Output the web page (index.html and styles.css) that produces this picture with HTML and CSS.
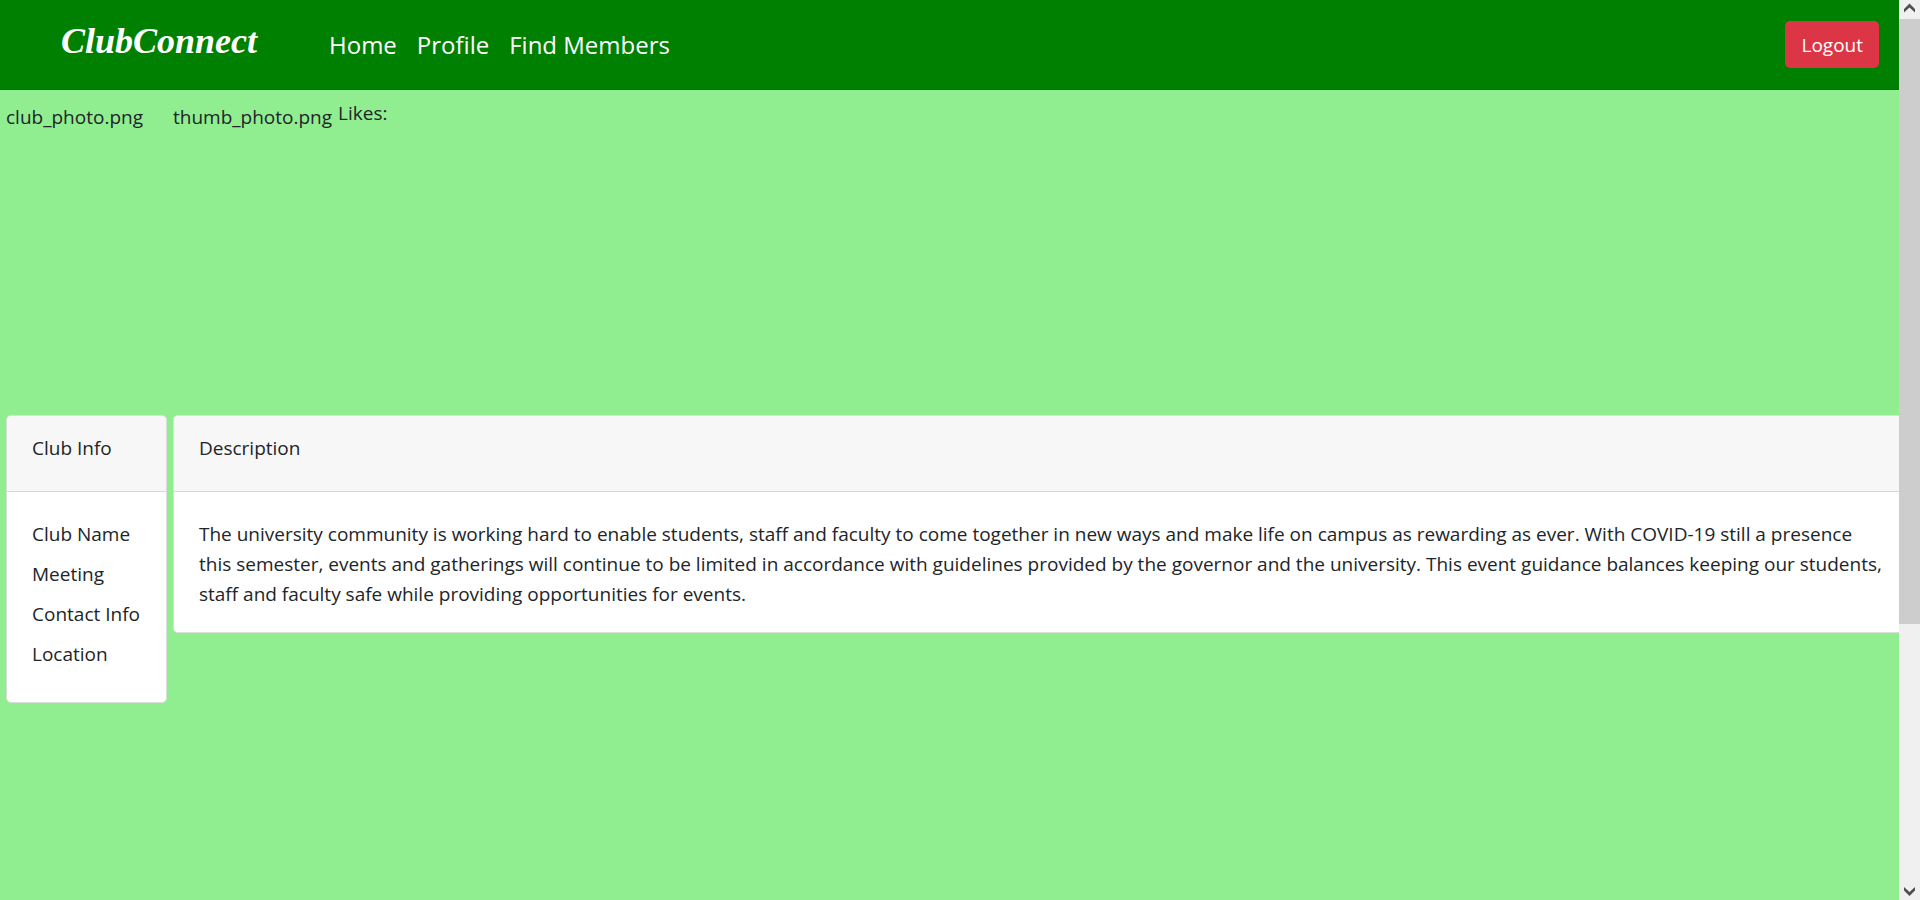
FILE: index.html
```html
<!DOCTYPE html>
<html lang="en">
<head>
<meta charset="utf-8">
<title>ClubConnect</title>
<link rel="stylesheet" href="styles.css">
</head>
<body>
<div class="page">
  <header class="navbar">
    <a class="brand" href="#">ClubConnect</a>
    <nav class="nav-links">
      <a href="#">Home</a>
      <a href="#">Profile</a>
      <a href="#">Find Members</a>
    </nav>
    <button class="logout" type="button">Logout</button>
  </header>
  <main class="club">
    <div class="photo">club_photo.png</div>
    <div class="likes"><span class="thumb">thumb_photo.png</span><span>Likes:</span></div>
    <section class="card">
      <h2 class="card-header">Club Info</h2>
      <ul class="card-body info-list">
        <li>Club Name</li>
        <li>Meeting</li>
        <li>Contact Info</li>
        <li>Location</li>
      </ul>
    </section>
    <section class="card card-wide">
      <h2 class="card-header">Description</h2>
      <p class="card-body">The university community is working hard to enable students, staff and faculty to come together in new ways and make life on campus as rewarding as ever. With COVID-19 still a presence this semester, events and gatherings will continue to be limited in accordance with guidelines provided by the governor and the university. This event guidance balances keeping our students, staff and faculty safe while providing opportunities for events.</p>
    </section>
  </main>
</div>
<div class="scrollbar" aria-hidden="true">
  <svg class="arrow" viewBox="0 0 21 19"><path d="M5 9 10.500 3.500 16 9V12.500L10.500 7.500 5 12.500Z"/></svg>
  <div class="track"><div class="thumb-bar"></div></div>
  <svg class="arrow" viewBox="0 0 21 19"><path d="M5 9.500 10.500 15 16 9.500V6L10.500 11 5 6Z"/></svg>
</div>
</body>
</html>
```
FILE: styles.css
```css
* { box-sizing: border-box; }

body {
  margin: 0;
  min-height: 100vh;
  display: flex;
  background: #90ee90;
  color: #212529;
  font: 19px/30px "Open Sans", "Noto Sans", sans-serif;
}

.page { flex: 1; min-width: 0; }

.navbar {
  display: flex;
  align-items: center;
  min-height: 90px;
  padding: 0 20px 0 61px;
  background: #008000;
  border-bottom: 1px solid #007300;
}

.navbar a { color: #fff; text-decoration: none; }

.brand {
  width: 258px;
  padding-bottom: 8px;
  font: italic bold 36px/48px "Liberation Serif", serif;
}

.nav-links {
  display: flex;
  gap: 20px;
  padding: 0 10px;
  font-size: 24px;
  line-height: 38px;
}

.logout {
  margin-left: auto;
  padding: 9px 16px 8px;
  border: 0;
  border-radius: 5px;
  background: #dc3545;
  color: #fff;
  font: inherit;
}

.club {
  display: grid;
  grid-template-columns: max-content 1fr;
  grid-template-rows: 313px auto;
  align-items: start;
  gap: 6px;
  padding: 6px 0 6px 6px;
}

.photo { padding-top: 6px; }

.likes {
  display: flex;
  align-items: flex-start;
  gap: 6px;
  padding-top: 2px;
}

.thumb { padding-top: 4px; }

.card {
  overflow: hidden;
  border: 1px solid #d8dfd8;
  border-radius: 5px;
  background: #fff;
}

.card-wide {
  border-right: 0;
  border-radius: 5px 0 0 5px;
}

.card-header {
  margin: 0;
  padding: 17px 25px 28px;
  border-bottom: 1px solid #d8d8d8;
  background: #f7f7f7;
  font-size: 19px;
  font-weight: 400;
  line-height: 30px;
}

.card-body {
  margin: 0;
  padding: 27px 16px 23px 25px;
}

.info-list {
  display: grid;
  gap: 10px;
  padding: 27px 26px 33px 25px;
  list-style: none;
}

.scrollbar {
  position: sticky;
  top: 0;
  display: flex;
  flex-direction: column;
  width: 21px;
  height: 100vh;
  background: #f0f0f0;
}

.arrow { width: 21px; height: 19px; fill: #505050; }
.track { flex: 1; }
.thumb-bar { height: 70.2%; background: #cdcdcd; }
```
